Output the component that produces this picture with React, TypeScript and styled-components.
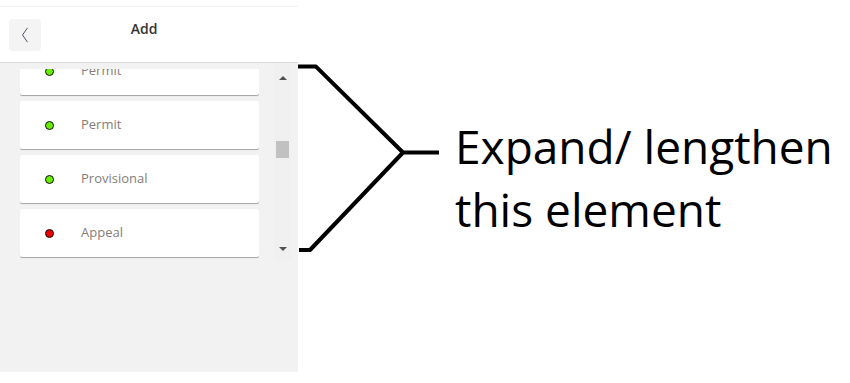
import * as React from "react";
import styled, { createGlobalStyle } from "styled-components";

const GlobalStyle = createGlobalStyle`
  html, body {
    margin: 0;
    padding: 0;
    background: #ffffff;
  }
  body {
    font-family: "Open Sans", "Noto Sans", sans-serif;
  }
`;

const Page = styled.div`
  display: flex;
  align-items: flex-start;
  width: 850px;
  height: 383px;
  overflow: hidden;
  background: #ffffff;
`;

const Panel = styled.div`
  display: flex;
  flex-direction: column;
  width: 298px;
  height: 366px;
  margin-top: 6px;
  border-top: 1px solid #f1f1f1;
  background: #f2f2f2;
  box-sizing: border-box;
`;

const Header = styled.div`
  display: grid;
  grid-template-columns: 41px 1fr 51px;
  align-items: start;
  height: 56px;
  background: #ffffff;
  border-bottom: 1px solid #d9d9d9;
  box-sizing: border-box;
`;

const BackButton = styled.button`
  display: flex;
  align-items: center;
  justify-content: center;
  width: 32px;
  height: 32px;
  margin: 12px 0 0 9px;
  padding: 0;
  border: none;
  border-radius: 4px;
  background: #f4f4f4;
  cursor: pointer;
`;

const Title = styled.div`
  margin-top: 14px;
  text-align: center;
  font-size: 14px;
  font-weight: 600;
  color: #333333;
  line-height: 16px;
`;

const Body = styled.div`
  display: flex;
  align-items: stretch;
  gap: 15px;
  height: 196px;
  padding-left: 20px;
`;

const Viewport = styled.div`
  width: 239px;
  margin-top: 6px;
  overflow: hidden;
`;

const List = styled.div`
  display: flex;
  flex-direction: column;
  gap: 6px;
  margin-top: -22px;
  padding-bottom: 4px;
`;

const Card = styled.div`
  display: flex;
  align-items: center;
  gap: 27px;
  height: 48px;
  flex-shrink: 0;
  padding-left: 25px;
  background: #ffffff;
  border-radius: 2px;
  box-shadow: 0 1px 1px rgba(0, 0, 0, 0.22), 0 1px 0 rgba(0, 0, 0, 0.12);
`;

const Dot = styled.span<{ $color: string }>`
  width: 9px;
  height: 9px;
  border-radius: 50%;
  box-sizing: border-box;
  border: 1.5px solid #111111;
  background: ${(p) => p.$color};
  flex-shrink: 0;
`;

const Label = styled.span`
  font-size: 13px;
  color: #847d78;
  line-height: 16px;
  margin-top: -2px;
`;

const Scrollbar = styled.div`
  display: flex;
  flex-direction: column;
  width: 17px;
  background: #f0f0f0;
`;

const ArrowButton = styled.div<{ $h: number }>`
  display: flex;
  align-items: center;
  justify-content: center;
  height: ${(p) => p.$h}px;
  flex-shrink: 0;
`;

const Track = styled.div`
  flex: 1;
  display: flex;
  flex-direction: column;
  align-items: center;
`;

const Thumb = styled.div`
  width: 13px;
  height: 17px;
  background: #c1c1c1;
`;

const Triangle = styled.span<{ $up?: boolean }>`
  width: 0;
  height: 0;
  border-left: 4px solid transparent;
  border-right: 4px solid transparent;
  ${(p) =>
    p.$up
      ? "border-bottom: 4px solid #505050;"
      : "border-top: 4px solid #505050;"}
`;

const Annotation = styled.div`
  display: flex;
  align-items: flex-start;
`;

const Bracket = styled.svg`
  display: block;
  margin-top: 60px;
  flex-shrink: 0;
`;

const Note = styled.div`
  margin: 115px 0 0 10px;
  font-family: "Open Sans", "Noto Sans", sans-serif;
  font-size: 46px;
  line-height: 63px;
  color: #000000;
  white-space: nowrap;
`;

const items = [
  { label: "Permit", color: "#66ee00" },
  { label: "Permit", color: "#66ee00" },
  { label: "Provisional", color: "#66ee00" },
  { label: "Appeal", color: "#ee0000" },
];

export default function App() {
  return (
    <>
      <GlobalStyle />
      <Page>
        <Panel>
          <Header>
            <BackButton aria-label="Back">
              <svg width="10" height="16" viewBox="0 0 10 16">
                <path d="M7.5 0.8 L2.5 8 L7.5 15.2" fill="none" stroke="#5b4d6b" strokeWidth="1" />
              </svg>
            </BackButton>
            <Title>Add</Title>
            <span />
          </Header>
          <Body>
            <Viewport>
              <List>
                {items.map((it, i) => (
                  <Card key={i}>
                    <Dot $color={it.color} />
                    <Label>{it.label}</Label>
                  </Card>
                ))}
              </List>
            </Viewport>
            <Scrollbar>
              <ArrowButton $h={30}>
                <Triangle $up />
              </ArrowButton>
              <Track>
                <Thumb style={{ marginTop: 48 }} />
              </Track>
              <ArrowButton $h={20}>
                <Triangle />
              </ArrowButton>
            </Scrollbar>
          </Body>
        </Panel>
        <Annotation>
          <Bracket width="147" height="200" viewBox="0 0 147 200">
            <path
              d="M0 6.6 L18 6.6 L105 92.5 L141 92.5 M105 92.5 L12 190 L1 190"
              fill="none"
              stroke="#000000"
              strokeWidth="4"
              strokeLinejoin="round"
            />
          </Bracket>
          <Note>
            Expand/ lengthen
            <br />
            this element
          </Note>
        </Annotation>
      </Page>
    </>
  );
}
